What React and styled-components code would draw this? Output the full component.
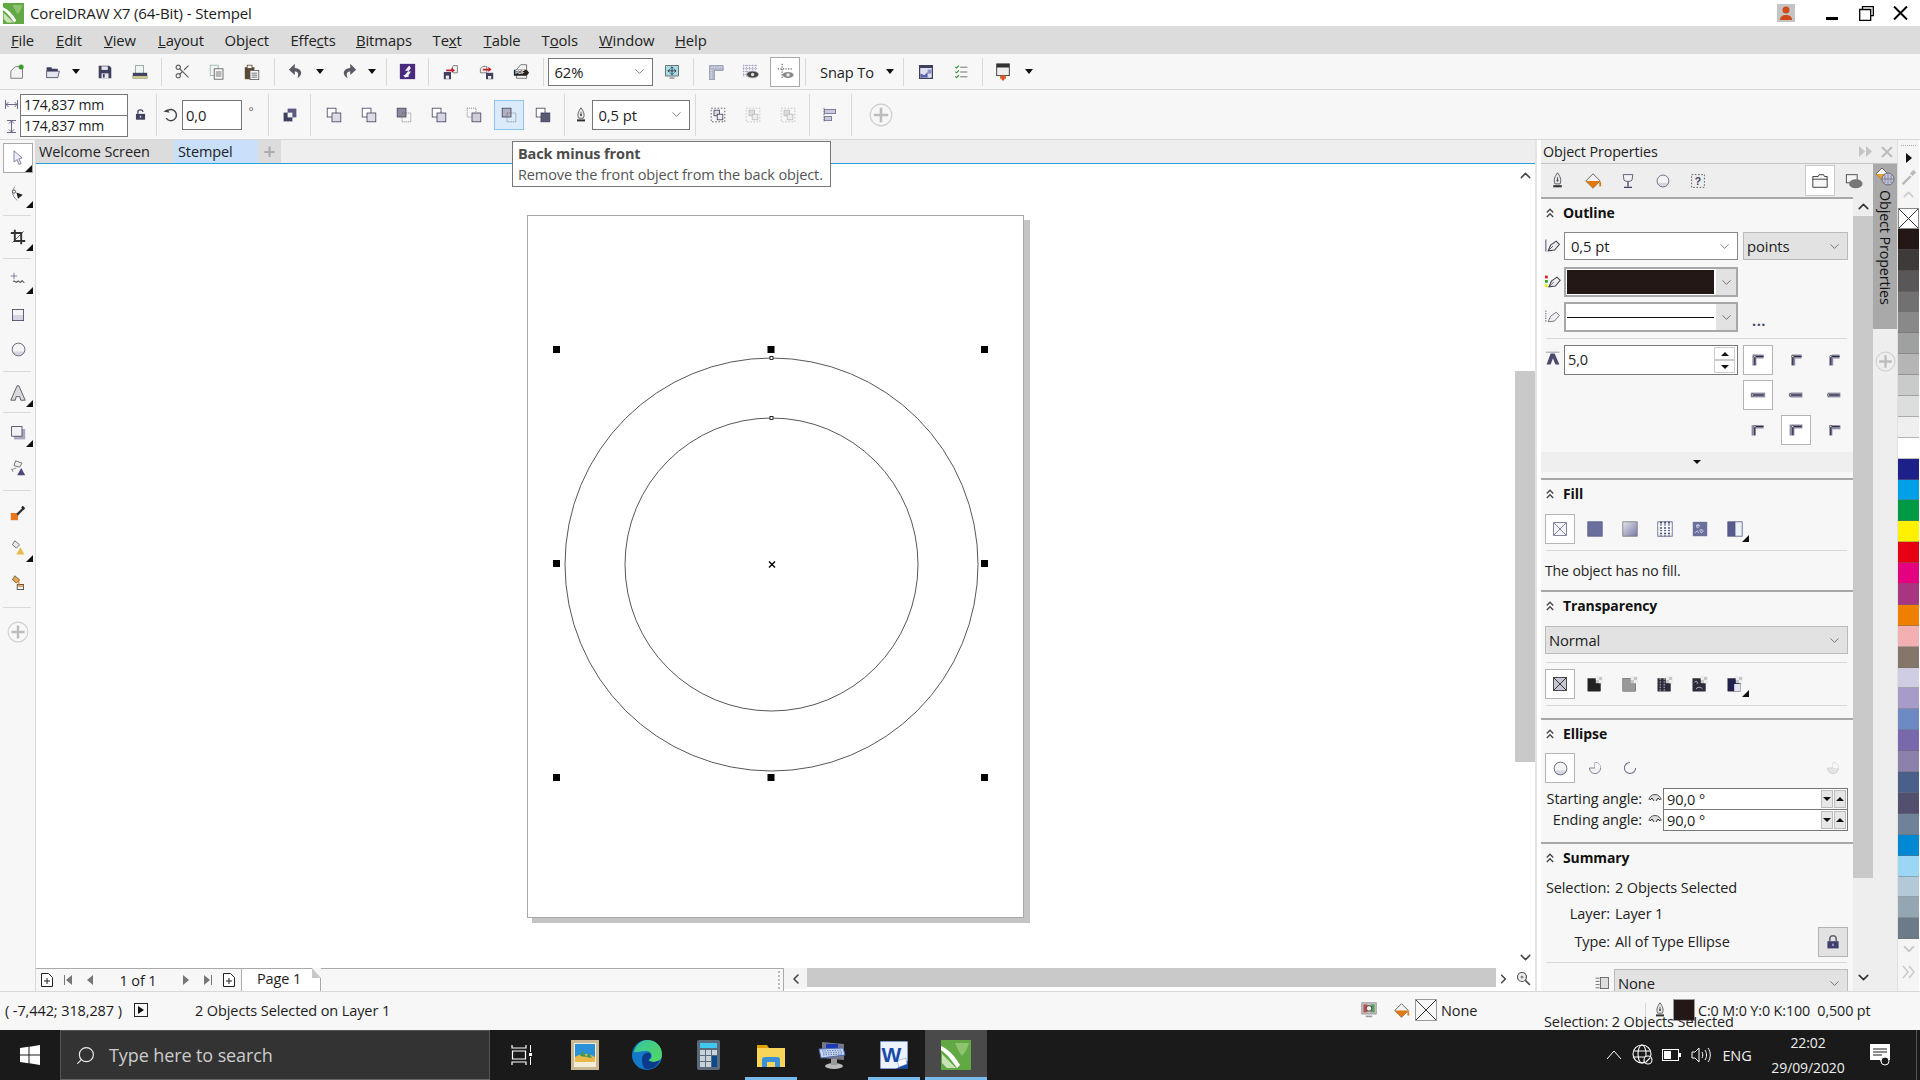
import React from 'react';
import styled, { createGlobalStyle } from 'styled-components';
import { ChevronDown, ChevronUp, ChevronLeft, ChevronRight, Scissors, Search } from 'lucide-react';

const GlobalStyle = createGlobalStyle`
  html, body { margin: 0; padding: 0; overflow: hidden; background: #fff; }
  * { box-sizing: border-box; }
  body { font-family: "Open Sans", "Noto Sans", sans-serif; font-size: 14.5px; color: #1c1c1c; }
  u { text-underline-offset: 1px; text-decoration-thickness: 1px; }
`;

const Shell = styled.div`
  position: relative;
  width: 1920px;
  height: 1080px;
  display: flex;
  flex-direction: column;
  overflow: hidden;
  letter-spacing: -0.1px;
`;

/* ---------- top bars ---------- */
const TitleBar = styled.div`
  height: 26px;
  background: #fff;
  display: flex;
  align-items: center;
  padding-left: 3px;
`;
const TitleText = styled.div`
  margin-left: 6px;
  font-size: 15px;
  flex: 1;
`;
const TitleButton = styled.div`
  width: 34px;
  height: 26px;
  margin-left: ${(p) => p.$ml || 0}px;
  display: flex;
  align-items: center;
  justify-content: center;
`;
const MenuBar = styled.div`
  height: 28px;
  background: #dcdcdc;
  display: flex;
  align-items: center;
  padding-left: 11px;
`;
const MenuItem = styled.span`
  width: ${(p) => p.$w}px;
  flex: none;
  font-size: 14.8px;
  color: #222;
`;
const ToolRow = styled.div`
  height: ${(p) => p.$h}px;
  background: #f7f7f7;
  border-bottom: 1px solid #d8d8d8;
  display: flex;
  align-items: center;
`;
const Tool = styled.div`
  flex: none;
  width: ${(p) => p.$w || 35}px;
  height: 30px;
  margin-left: ${(p) => p.$ml || 0}px;
  display: flex;
  align-items: center;
  justify-content: center;
  background: ${(p) => (p.$blue ? '#dcebfa' : 'transparent')};
  border: ${(p) => (p.$blue ? '1px solid #8cc4ee' : p.$on ? '1px solid #a8a8a8' : 'none')};
  ${(p) => p.$on && 'background: #fff;'}
`;
const Drop = styled.div`
  flex: none;
  width: ${(p) => p.$w || 17}px;
  margin-left: ${(p) => p.$ml || 0}px;
  padding-left: 2px;
  display: flex;
  &::before {
    content: '';
    border-left: 4.5px solid transparent;
    border-right: 4.5px solid transparent;
    border-top: 5px solid #111;
  }
`;
const Sep = styled.div`
  flex: none;
  width: 1px;
  height: ${(p) => p.$h || 28}px;
  margin: 0 ${(p) => p.$r ?? p.$m ?? 3}px 0 ${(p) => p.$m ?? 3}px;
  background: #d9d9d9;
`;
const Combo = styled.div`
  flex: none;
  width: ${(p) => p.$w}px;
  height: ${(p) => p.$h || 28}px;
  margin-left: ${(p) => p.$ml || 0}px;
  background: ${(p) => p.$bg || '#fff'};
  border: 1px solid ${(p) => p.$line || '#777'};
  display: flex;
  align-items: center;
  justify-content: space-between;
  padding: 0 5px 0 ${(p) => p.$pad ?? (p.$bg ? 3 : 6)}px;
  font-size: 14.8px;
  color: #1c1c1c;
  white-space: nowrap;
  overflow: hidden;
`;
const SnapLabel = styled.span`
  margin-left: 6px;
  font-size: 14.6px;
`;
const SizeStack = styled.div`
  margin: 2px 0 0 3px;
  display: grid;
  grid-template-columns: 17px 108px;
  grid-auto-rows: 21.5px;
  align-items: center;
  justify-items: center;
`;
const SizeField = styled.div`
  width: 100%;
  height: 22px;
  border: 1px solid #777;
  background: #fff;
  font-size: 14px;
  padding-left: 3px;
  line-height: 20px;
`;
const Degree = styled.span`
  width: 18px;
  text-align: center;
  font-size: 12px;
  color: #666;
  margin-bottom: 6px;
`;

/* ---------- workspace ---------- */
const Workspace = styled.div`
  flex: 1;
  min-height: 0;
  display: flex;
  background: #fff;
`;
const Toolbox = styled.div`
  width: 36px;
  flex: none;
  background: #f7f7f7;
  border-right: 1px solid #d8d8d8;
  padding: 1px 0 0 3px;
`;
const BoxTool = styled.div`
  position: relative;
  width: 30px;
  height: ${(p) => (p.$on ? 30 : 35)}px;
  margin: ${(p) => (p.$on ? '2px 0 3px' : 0)};
  display: flex;
  align-items: center;
  justify-content: center;
  border: ${(p) => (p.$on ? '1px solid #aaa' : 'none')};
  background: ${(p) => (p.$on ? '#fff' : 'transparent')};
  ${(p) =>
    p.$more &&
    `&::after {
      content: '';
      position: absolute;
      right: 0;
      bottom: ${p.$on ? 0 : 3}px;
      border-left: 7px solid transparent;
      border-bottom: 7px solid #111;
    }`}
`;
const BoxSep = styled.div`
  height: ${(p) => p.$h || 8}px;
  display: flex;
  align-items: center;
  &::before {
    content: '';
    width: 28px;
    height: 1px;
    background: #d9d9d9;
  }
`;
const DocArea = styled.div`
  width: 1499px;
  flex: none;
  display: flex;
  flex-direction: column;
`;
const DocTabs = styled.div`
  height: 24px;
  flex: none;
  background: #eee;
  border-bottom: 1px solid #2a9fe0;
  display: flex;
`;
const DocTab = styled.div`
  width: ${(p) => p.$w}px;
  height: 23px;
  background: ${(p) => p.$bg};
  padding-left: ${(p) => p.$pad}px;
  font-size: 14.5px;
  line-height: 23px;
  color: #222;
`;
const AddTab = styled.div`
  width: 23px;
  height: 23px;
  background: #dcdcdc;
  color: #aaa;
  font-size: 22px;
  font-weight: 600;
  line-height: 21px;
  text-align: center;
`;
const CanvasRow = styled.div`
  flex: 1;
  min-height: 0;
  display: flex;
`;
const Canvas = styled.div`
  position: relative;
  flex: 1;
`;
const Drawing = styled.svg`
  position: absolute;
  left: 0;
  top: 0;
`;
const Tooltip = styled.div`
  position: absolute;
  left: 512px;
  top: 141px;
  width: 319px;
  height: 46px;
  background: #fff;
  border: 1px solid #777;
  padding: 1px 5px;
  color: #555;
  font-size: 14.5px;
  line-height: 21px;
  letter-spacing: -0.12px;
  white-space: nowrap;
  z-index: 5;
  b { font-weight: 700; color: #4c4c4c; }
`;
const VTrack = styled.div`
  width: 20px;
  flex: none;
  display: flex;
  flex-direction: column;
  align-items: center;
  background: #fff;
`;
const Arrow = styled.div`
  height: ${(p) => p.$h || 22}px;
  display: flex;
  align-items: center;
  justify-content: center;
  color: #444;
  flex: none;
`;
const VThumb = styled.div`
  width: 20px;
  height: ${(p) => p.$h}px;
  margin-top: ${(p) => p.$mt}px;
  margin-bottom: auto;
  background: #c9c9c9;
`;
const PageBar = styled.div`
  height: 23px;
  flex: none;
  display: flex;
  align-items: stretch;
`;
const PageNav = styled.div`
  width: 748px;
  flex: none;
  display: flex;
  align-items: center;
  background: #f7f7f7;
  border-top: 1px solid #aaa;
  border-right: 1px solid #aaa;
  padding-left: 4px;
`;
const PageIcon = styled.div`
  width: ${(p) => p.$w || 22}px;
  margin-left: ${(p) => p.$ml || 0}px;
  display: flex;
  justify-content: center;
  flex: none;
`;
const PageCount = styled.div`
  width: 76px;
  text-align: center;
  font-size: 14.5px;
  flex: none;
`;
const PageTab = styled.div`
  position: relative;
  width: 80px;
  height: 22px;
  margin-left: 1px;
  background: #fff;
  border-left: 1px solid #aaa;
  border-right: 1px solid #aaa;
  padding-left: 15px;
  font-size: 14.5px;
  line-height: 20px;
  &::after {
    content: '';
    position: absolute;
    top: -1px;
    right: -1px;
    border-top: 10px solid #f7f7f7;
    border-left: 9px solid #c8c8c8;
  }
`;
const Grip = styled.div`
  margin-left: auto;
  margin-right: 3px;
  width: 2px;
  height: 18px;
  border-left: 2px dotted #bbb;
`;
const HTrack = styled.div`
  flex: 1;
  display: flex;
  align-items: flex-start;
  background: #fff;
`;
const HButton = styled.div`
  width: ${(p) => p.$w}px;
  height: 21px;
  display: flex;
  align-items: center;
  justify-content: center;
  color: #444;
  background: ${(p) => p.$bg || 'transparent'};
  flex: none;
`;
const HThumb = styled.div`
  width: 689px;
  height: 19px;
  background: #c9c9c9;
  flex: none;
`;

/* ---------- docker ---------- */
const Gap = styled.div`
  width: 6px;
  flex: none;
  background: #fff;
  border-left: 2px solid #e4e4e4;
`;
const Docker = styled.div`
  width: 356px;
  flex: none;
  display: flex;
  flex-direction: column;
`;
const DockHead = styled.div`
  height: 24px;
  flex: none;
  background: #eee;
  border-bottom: 1px solid #c4c4c4;
  display: flex;
  align-items: center;
  gap: 8px;
  padding: 0 4px 0 2px;
  font-size: 14.3px;
  color: #222;
`;
const DockTitle = styled.div`
  flex: 1;
`;
const DockBody = styled.div`
  flex: 1;
  min-height: 0;
  display: flex;
`;
const DockMain = styled.div`
  width: 332px;
  flex: none;
  display: flex;
  flex-direction: column;
  overflow: hidden;
`;
const TabIcons = styled.div`
  height: 33px;
  flex: none;
  background: #eee;
  display: flex;
  align-items: center;
`;
const TabIcon = styled.div`
  flex: none;
  width: ${(p) => p.$w || 35}px;
  height: ${(p) => (p.$on ? 31 : 30)}px;
  margin-left: ${(p) => p.$ml || 0}px;
  background: ${(p) => (p.$on ? '#fff' : 'transparent')};
  border: ${(p) => (p.$on ? '1px solid #c8c8c8' : 'none')};
  display: flex;
  align-items: center;
  justify-content: center;
`;
const ScrollWrap = styled.div`
  flex: 1;
  min-height: 0;
  display: flex;
`;
const Panel = styled.div`
  width: 312px;
  flex: none;
  background: #f7f7f7;
  overflow: hidden;
`;
const Section = styled.div`
  border-top: 2px solid #a8a8a8;
  padding: 0 5px ${(p) => p.$pb || 0}px 4px;
`;
const SectionHead = styled.div`
  height: 30px;
  display: flex;
  align-items: center;
  gap: 9px;
  font-weight: 700;
  font-size: 14px;
  color: #111;
  padding: 0 0 3px 1px;
`;
const Row = styled.div`
  display: flex;
  align-items: center;
  margin-top: ${(p) => p.$mt || 0}px;
`;
const FieldIcon = styled.div`
  width: 19px;
  height: 28px;
  flex: none;
  display: flex;
  align-items: center;
`;
const SwatchField = styled.div`
  width: 174px;
  height: 30px;
  flex: none;
  border: 2px solid #a8a8a8;
  background: #fff;
  display: flex;
`;
const SwatchFill = styled.div`
  flex: 1;
  margin: 1px 2px 1px 1px;
  background: ${(p) => p.$color};
`;
const LineFill = styled.div`
  flex: 1;
  margin: 0 2px 0 1px;
  display: flex;
  align-items: center;
  &::before {
    content: '';
    flex: 1;
    height: 1px;
    background: #111;
  }
`;
const DropPart = styled.div`
  width: 20px;
  flex: none;
  background: #e2e2e2;
  display: flex;
  align-items: center;
  justify-content: center;
  color: #555;
`;
const Ellipsis = styled.span`
  margin-left: 14px;
  margin-top: 6px;
  color: #446;
  font-weight: 700;
  letter-spacing: 0.5px;
`;
const Divider = styled.div`
  height: 1px;
  margin: ${(p) => p.$mt || 6}px 1px 0;
  background: #dadada;
`;
const MiterWrap = styled.div`
  display: flex;
  align-items: flex-start;
  margin-top: 6px;
`;
const MiterField = styled.div`
  width: 174px;
  height: 30px;
  flex: none;
  border: 1px solid #777;
  background: #fff;
  display: flex;
  justify-content: space-between;
  padding-left: 3px;
  line-height: 28px;
  font-size: 14.5px;
`;
const Spin = styled.div`
  width: 21px;
  margin: 1px 2px;
  display: flex;
  flex-direction: column;
  border-left: 1px solid #ccc;
  border-right: 1px solid #ccc;
`;
const SpinPart = styled.div`
  flex: 1;
  display: flex;
  align-items: center;
  justify-content: center;
  border-top: 1px solid #ccc;
  border-bottom: 1px solid #ccc;
  &::before {
    content: '';
    border-left: 4px solid transparent;
    border-right: 4px solid transparent;
    ${(p) => (p.$up ? 'border-bottom: 4px solid #111;' : 'border-top: 4px solid #111;')}
  }
`;
const CornerGrid = styled.div`
  margin-left: 5px;
  display: grid;
  grid-template-columns: repeat(3, 30px);
  grid-auto-rows: 30px;
  column-gap: 8px;
  row-gap: 5px;
`;
const OptionButton = styled.div`
  position: relative;
  width: 30px;
  height: 30px;
  flex: none;
  display: flex;
  align-items: center;
  justify-content: center;
  background: ${(p) => (p.$on ? '#fff' : 'transparent')};
  border: 1px solid ${(p) => (p.$on ? '#b4b4b4' : 'transparent')};
  ${(p) =>
    p.$more &&
    `&::after {
      content: '';
      position: absolute;
      right: 0;
      bottom: 1px;
      border-left: 7px solid transparent;
      border-bottom: 7px solid #111;
    }`}
`;
const OptionRow = styled.div`
  display: flex;
  gap: 5px;
  margin-top: ${(p) => p.$mt || 0}px;
`;
const PushRight = styled.div`
  margin-left: auto;
  width: 30px;
  height: 30px;
  display: flex;
  align-items: center;
  justify-content: center;
`;
const CollapseBar = styled.div`
  height: 20px;
  margin: 7px -5px 6px -4px;
  background: #efefef;
  display: flex;
  align-items: center;
  justify-content: center;
  &::before {
    content: '';
    border-left: 4px solid transparent;
    border-right: 4px solid transparent;
    border-top: 4px solid #111;
  }
`;
const NoFill = styled.div`
  height: 39px;
  line-height: 39px;
  font-size: 14px;
  color: #222;
`;
const AngleRow = styled.div`
  display: grid;
  grid-template-columns: 97px 21px 185px;
  align-items: center;
  height: 21px;
  margin-top: ${(p) => p.$mt || 0}px;
`;
const AngleLabel = styled.div`
  text-align: right;
  font-size: 14.5px;
  color: #222;
  margin-top: -1px;
`;
const AngleIconCell = styled.div`
  display: flex;
  justify-content: flex-end;
  padding-right: 1px;
`;
const AngleField = styled.div`
  height: 22px;
  background: #fff;
  border: 1px solid #777;
  display: flex;
  align-items: center;
  justify-content: space-between;
  padding-left: 3px;
  font-size: 14.5px;
`;
const AngleSpins = styled.div`
  display: flex;
  gap: 1px;
  margin-right: 1px;
`;
const AngleSpin = styled.div`
  width: 12px;
  height: 18px;
  background: #e6e6e6;
  border: 1px solid #bbb;
  display: flex;
  align-items: center;
  justify-content: center;
  &::before {
    content: '';
    border-left: 4px solid transparent;
    border-right: 4px solid transparent;
    ${(p) => (p.$up ? 'border-bottom: 4px solid #111;' : 'border-top: 4px solid #111;')}
  }
`;
const SummaryRow = styled.div`
  display: grid;
  grid-template-columns: 65px 1fr auto;
  column-gap: 5px;
  align-items: center;
  height: ${(p) => p.$h}px;
  font-size: 14.5px;
  color: #222;
`;
const SummaryLabel = styled.div`
  text-align: right;
`;
const LockButton = styled.div`
  width: 30px;
  height: 30px;
  background: #e2e2e2;
  border: 1px solid #b4b4b4;
  display: flex;
  align-items: center;
  justify-content: center;
`;
const ListSpacer = styled.div`
  width: 49px;
  flex: none;
`;
const PanelScroll = styled.div`
  width: 20px;
  flex: none;
  background: #eee;
  display: flex;
  flex-direction: column;
  align-items: center;
`;
const PanelThumb = styled.div`
  width: 20px;
  height: 662px;
  background: #c9c9c9;
  margin-bottom: auto;
`;
const VerticalTabs = styled.div`
  width: 24px;
  flex: none;
  background: #eee;
  display: flex;
  flex-direction: column;
  align-items: center;
`;
const VerticalTab = styled.div`
  width: 24px;
  height: 165px;
  background: #a9a9a9;
  display: flex;
  flex-direction: column;
  align-items: center;
  padding-top: 3px;
`;
const VerticalText = styled.div`
  writing-mode: vertical-rl;
  font-size: 14.3px;
  line-height: 16px;
  color: #111;
  margin-top: 3px;
`;
const Palette = styled.div`
  width: 22px;
  flex: none;
  background: #f5f5f5;
  border-left: 1px solid #e0e0e0;
  display: flex;
  flex-direction: column;
  align-items: center;
`;
const PaletteTop = styled.div`
  height: 68px;
  flex: none;
  display: flex;
  flex-direction: column;
  align-items: center;
  color: #ccc;
`;
const Dots = styled.div`
  width: 15px;
  height: 1px;
  margin-top: 5px;
  border-top: 1px dotted #aaa;
`;
const PlayMark = styled.div`
  margin: 7px 0 5px;
  border-top: 5px solid transparent;
  border-bottom: 5px solid transparent;
  border-left: 6px solid #111;
`;
const Swatches = styled.div`
  width: 21px;
  display: grid;
  grid-auto-rows: 20.9px;
`;
const Swatch = styled.div`
  background: ${(p) => p.$c};
  box-shadow: inset 0 -1px 0 rgba(110, 110, 110, 0.45);
`;
const NoColor = styled.div`
  background: #fff;
  border: 1px solid #888;
  display: flex;
`;
const PaletteEnd = styled.div`
  margin-top: 1px;
  display: flex;
  flex-direction: column;
  align-items: center;
  color: #c8c8c8;
  gap: 7px;
`;
const PanelPlus = styled.div`
  margin-top: 22px;
`;

/* ---------- status bar and taskbar ---------- */
const StatusBar = styled.div`
  position: relative;
  height: 39px;
  flex: none;
  background: #f7f7f7;
  border-top: 1px solid #d8d8d8;
  padding-bottom: 2px;
  display: flex;
  align-items: center;
  font-size: 14.5px;
`;
const Coordinates = styled.span`
  margin-left: 5px;
  width: 129px;
  flex: none;
`;
const PlayBox = styled.div`
  width: 14px;
  height: 14px;
  flex: none;
  border: 1px solid #222;
  display: flex;
  align-items: center;
  justify-content: center;
  &::before {
    content: '';
    border-top: 4px solid transparent;
    border-bottom: 4px solid transparent;
    border-left: 6px solid #111;
  }
`;
const StatusText = styled.span`
  margin-left: 47px;
  flex: 1;
`;
const StatusRight = styled.div`
  display: flex;
  align-items: center;
  width: 568px;
  flex: none;
  padding-left: 9px;
`;
const StatusGap = styled.div`
  width: ${(p) => p.$w}px;
  flex: none;
`;
const NoneBox = styled.div`
  width: 22px;
  height: 22px;
  margin-left: 5px;
  border: 1px solid #999;
  display: flex;
  flex: none;
`;
const NoneLabel = styled.span`
  margin-left: 4px;
  width: 202px;
  flex: none;
`;
const StatusSwatch = styled.div`
  width: 22px;
  height: 22px;
  background: #231815;
  border: 1px solid #999;
  flex: none;
  margin: 0 3px 0 5px;
`;
const ColorInfo = styled.span`
  white-space: pre;
  font-size: 14.3px;
`;
const GhostClip = styled.div`
  position: absolute;
  left: 1544px;
  top: 25px;
  height: 13px;
  overflow: hidden;
  font-size: 14.5px;
  color: #222;
  white-space: nowrap;
`;
const GhostText = styled.div`
  margin-top: -5px;
`;
const Taskbar = styled.div`
  height: 50px;
  flex: none;
  background: #1a1a1a;
  display: flex;
  align-items: center;
  color: #fff;
`;
const StartButton = styled.div`
  width: 60px;
  flex: none;
  display: flex;
  justify-content: center;
`;
const SearchBox = styled.div`
  width: 430px;
  height: 50px;
  flex: none;
  background: #333;
  border: 1px solid #555;
  border-bottom-color: #666;
  display: flex;
  align-items: center;
  padding-left: 14px;
  gap: 13px;
  font-size: 18px;
  color: #ccc;
`;
const TaskCell = styled.div`
  position: relative;
  width: ${(p) => p.$w || 61.9}px;
  height: 50px;
  flex: none;
  display: flex;
  align-items: center;
  justify-content: center;
  background: ${(p) => (p.$on ? '#4a4a4a' : 'transparent')};
  ${(p) =>
    p.$open &&
    `&::after {
      content: '';
      position: absolute;
      left: ${p.$on ? 0 : 5}px;
      right: ${p.$on ? 0 : 5}px;
      bottom: 0;
      height: 3px;
      background: #76b9ed;
    }`}
`;
const Tray = styled.div`
  margin-left: auto;
  display: flex;
  align-items: center;
  height: 50px;
  padding-right: 3px;
`;
const TrayCell = styled.div`
  width: ${(p) => p.$w || 29}px;
  display: flex;
  justify-content: center;
  font-size: 14.5px;
  color: #eee;
  flex: none;
`;
const Clock = styled.div`
  width: 92px;
  text-align: center;
  font-size: 14px;
  line-height: 25px;
  color: #eee;
  margin-left: 4px;
`;
const ShowDesktop = styled.div`
  width: 1px;
  height: 50px;
  margin-left: 10px;
  background: #555;
`;

/* ---------- icons ---------- */
const G = ({ s = 16, children }) => (
  <svg width={s} height={s} viewBox="0 0 20 20" style={{ display: 'block', flex: 'none' }}>
    {children}
  </svg>
);
const INK = '#3f3f5f';
const MID = '#6a6a8c';

const NewDoc = () => (
  <G s={18}>
    <path d="M2 9l5-5h8v13H2z" fill="#f2f2f2" stroke="#777" />
    <circle cx="13.5" cy="4.5" r="2.8" fill="#3a9a2c" />
  </G>
);
const OpenIcon = () => (
  <G>
    <path d="M2 4h6l1 2h7v3H2z" fill={INK} />
    <path d="M2 9h16l-2 8H2z" fill="#e4e6ef" stroke={INK} />
  </G>
);
const SaveIcon = () => (
  <G s={14}>
    <path d="M1 1h15l3 3v15H1z" fill={INK} />
    <rect x="5" y="2" width="9" height="5" fill="#e8e8f0" />
    <rect x="5" y="12" width="10" height="7" fill="#e8e8f0" />
    <rect x="7" y="13" width="2.5" height="5" fill={INK} />
  </G>
);
const PrintIcon = () => (
  <G>
    <rect x="4.5" y="2" width="10" height="10" fill="#eef5f2" stroke="#8a9a98" />
    <rect x="1" y="11" width="18" height="4" fill={INK} />
    <rect x="1" y="15" width="18" height="3" fill="#d8d288" stroke="#777" strokeWidth="0.6" />
  </G>
);
const CutIcon = () => <Scissors size={17} color="#666" strokeWidth={1.7} style={{ transform: 'scaleY(-1)' }} />;
const CopyIcon = () => (
  <G>
    <rect x="1.5" y="1.5" width="10" height="13" fill="#eef5f3" stroke="#93b4ad" />
    <rect x="6.5" y="6" width="11" height="13" fill="#f7f7f7" stroke="#555" />
    <path d="M8.5 10h7M8.5 12.5h7M8.5 15h7" stroke="#555" />
  </G>
);
const PasteIcon = () => (
  <G>
    <rect x="1" y="4" width="12" height="15" fill="#5c4a35" />
    <rect x="4" y="1.5" width="6" height="4" fill="#f4f4f4" stroke="#5c4a35" />
    <rect x="7.5" y="8" width="11" height="11.5" fill="#f7f7f7" stroke="#555" />
    <path d="M9.5 11.5h7M9.5 14h7M9.5 16.5h7" stroke="#555" />
  </G>
);
const UndoIcon = () => (
  <G s={17}>
    <path d="M8 1L1 8l7 6v-4c4 0 5 3 3 8 6-3 7-11-3-12z" fill="#5a5a66" />
  </G>
);
const RedoIcon = () => (
  <G s={17}>
    <path d="M12 1l7 7-7 6v-4c-4 0-5 3-3 8-6-3-7-11 3-12z" fill="#5a5a66" />
  </G>
);
const ConnectIcon = () => (
  <G s={17}>
    <rect x="1" y="1" width="18" height="18" fill="#4a2a7c" />
    <path d="M12 3L7 9h4l-4 5H5l2 3 5-1-1-1 3-5h-3l3-4z" fill="#f2f2f2" />
  </G>
);
const ImportIcon = () => (
  <G>
    <path d="M13 2h5v9h-5l-3-3z" fill="#f2f2f2" stroke="#666" />
    <rect x="1" y="10" width="9" height="9" fill={INK} />
    <rect x="3.5" y="14.5" width="4" height="4" fill="#eee" />
    <path d="M4 7h7V4.5L15 8l-4 3V9H4z" fill="#c0202a" />
  </G>
);
const ExportIcon = () => (
  <G>
    <path d="M3 6l3-3h5v8H3z" fill="#f2f2f2" stroke="#666" />
    <rect x="10" y="11" width="9" height="8" fill={INK} />
    <rect x="12.5" y="15" width="4" height="3.5" fill="#eee" />
    <path d="M6 6h7V3.5L17 7l-4 3V8H6z" fill="#c0202a" />
  </G>
);
const PdfIcon = () => (
  <G s={17}>
    <path d="M4 8l5-6h7v16H4z" fill="#f2f2f2" stroke="#666" />
    <path d="M1 8h15l3 3.5-3 3.5H1z" fill="#222" />
    <text x="2.5" y="13.5" fontSize="5.5" fontWeight="700" fill="#fff" fontFamily="Liberation Sans">PDF</text>
  </G>
);
const FullIcon = () => (
  <G>
    <rect x="2" y="2" width="16" height="13" fill="#a8dce6" stroke="#555" />
    <path d="M10 4v9M5 8.5h10M7 6.5L5 8.5l2 2M13 6.5l2 2-2 2M8 5.5l2-2 2 2M8 11.5l2 2 2-2" stroke="#223" fill="none" />
    <path d="M7 17.5h6" stroke="#777" strokeWidth="1.5" />
  </G>
);
const RulerIcon = () => (
  <G>
    <path d="M2 2h17v6H8v12H2z" fill="#b4b9cc" stroke="#8c90a8" />
    <path d="M5 3v2M8 3v2M11 3v2M14 3v2M17 3v2M3 8h2M3 11h2M3 14h2M3 17h2" stroke="#eee" />
  </G>
);
const GridEye = () => (
  <G s={17}>
    <path d="M2 2v14M5.5 2v14M9 2v14M12.5 2v7M16 2v7M1 3h17M1 6.5h17M1 10h8M1 13.5h8" stroke="#9a9abf" strokeDasharray="1.5 1" />
    <ellipse cx="12.5" cy="13.5" rx="7" ry="4" fill="#444" stroke="#bbb" />
    <circle cx="12.5" cy="13.5" r="2" fill="#ddd" />
  </G>
);
const GuideEye = () => (
  <G s={17}>
    <path d="M6 1v17M1 7h18" stroke="#222" strokeDasharray="1.5 1.5" />
    <ellipse cx="13" cy="14" rx="6.5" ry="3.5" fill="#8a8a8a" />
    <circle cx="13" cy="14" r="2" fill="#eee" />
  </G>
);
const OptionsIcon = () => (
  <G>
    <rect x="2" y="2" width="16" height="16" fill="#dfe1ee" stroke={INK} strokeWidth="1.5" />
    <rect x="2" y="2" width="16" height="3" fill={INK} />
    <path d="M3 17V12l5 2 4-4v7z" fill="#5a60a8" />
    <rect x="12" y="7" width="5" height="5" fill="#8a90c8" />
  </G>
);
const CheckIcon = () => (
  <G>
    <path d="M9 4h9M9 10h9M9 16h9" stroke="#555" />
    <path d="M3 3.5l1.5 1.5 3-3M3 9.5L4.5 11l3-3M3 15.5L4.5 17l3-3" stroke="#2f8f2f" fill="none" strokeWidth="1.4" />
  </G>
);
const LaunchIcon = () => (
  <G s={18}>
    <rect x="3" y="1" width="14" height="13" fill="#eee" stroke="#333" />
    <rect x="3" y="1" width="14" height="4" fill="#333" />
    <path d="M10 13c3 2 3 4 0 7-3-3-3-5 0-7z" fill="#e8481c" />
    <path d="M7 14c1 1 1 3 0 4M13 14c-1 1-1 3 0 4" stroke="#f09020" />
  </G>
);
const WidthIcon = () => (
  <svg width="13" height="11" viewBox="0 0 13 11">
    <path d="M.5 1v9M12.5 1v9M1 5.5h11M3.5 3L1 5.5 3.5 8M9.5 3L12 5.5 9.5 8" stroke={MID} fill="none" />
  </svg>
);
const HeightIcon = () => (
  <svg width="11" height="13" viewBox="0 0 11 13">
    <path d="M1 .5h9M1 12.5h9M5.5 1v11M3 3.5L5.5 1 8 3.5M3 9.5L5.5 12 8 9.5" stroke={MID} fill="none" />
  </svg>
);
const LockOpen = () => (
  <G s={13}>
    <path d="M6 9V6c0-4 7-4 8 0" stroke={INK} strokeWidth="2" fill="none" />
    <rect x="3" y="9" width="14" height="9" fill={INK} />
    <rect x="9" y="12" width="2" height="3" fill="#ddd" />
  </G>
);
const LockClosed = () => (
  <G>
    <path d="M6 9V6c0-5 8-5 8 0v3" stroke="#667" strokeWidth="2" fill="none" />
    <rect x="3" y="9" width="14" height="9" fill="#3f3f70" />
    <rect x="9" y="12" width="2" height="3" fill="#aab" />
  </G>
);
const RotateIcon = () => (
  <G>
    <path d="M5 5a7 7 0 1 1-1 9" stroke="#444" strokeWidth="1.8" fill="none" />
    <path d="M1 4h6v5z" fill="#444" transform="rotate(-30 4 6)" />
  </G>
);
const CombineIcon = () => (
  <G>
    <rect x="7" y="2" width="11" height="11" fill="#5a5a82" />
    <rect x="2" y="7" width="11" height="11" fill={INK} />
    <rect x="7" y="7" width="6" height="6" fill="#f2f2f2" />
  </G>
);
const Bool = ({ back, front, backDash, frontDash, frontOnTop = true }) => {
  const a = <rect x="1.5" y="1.5" width="11" height="11" fill={back} stroke={backDash ? '#666' : INK} strokeDasharray={backDash ? '1.2 1.2' : undefined} />;
  const b = <rect x="7.5" y="7.5" width="11" height="11" fill={front} stroke={frontDash ? '#666' : INK} strokeDasharray={frontDash ? '1.2 1.2' : undefined} />;
  return <G>{frontOnTop ? <>{a}{b}</> : <>{b}{a}</>}</G>;
};
const FadedBox = ({ x }) => (
  <G>
    <rect x="1.5" y="1.5" width="17" height="17" fill="none" stroke={x ? '#bbb' : INK} strokeDasharray="2 2" />
    <rect x="5" y="4" width="7" height="7" fill="#ddd" stroke={x ? '#bbb' : INK} />
    <rect x="9" y="9" width="7" height="7" fill="#eee" stroke={x ? '#bbb' : INK} />
  </G>
);
const AlignIcon = () => (
  <G>
    <path d="M2.5 1v18" stroke="#222" strokeDasharray="1 1" />
    <rect x="3" y="3" width="14" height="5" fill="#c9cade" stroke={MID} />
    <rect x="3" y="12" width="9" height="5" fill="#c9cade" stroke={MID} />
  </G>
);
const PlusRound = ({ s = 24 }) => (
  <G s={s}>
    <circle cx="10" cy="10" r="9" fill="none" stroke="#cfcfcf" />
    <path d="M10 4v12M4 10h12" stroke="#bdbdbd" strokeWidth="2.2" />
  </G>
);
const PenIcon = ({ s = 16 }) => (
  <G s={s}>
    <path d="M10 1c3 4 5 8 3 13H7C5 9 7 5 10 1z" fill="#e8e8ee" stroke="#444" />
    <path d="M10 6v5" stroke="#444" />
    <circle cx="10" cy="10" r="1.2" fill="#444" />
    <rect x="5" y="15.5" width="10" height="2.5" fill="#333" />
  </G>
);
const BucketIcon = ({ s = 18 }) => (
  <G s={s}>
    <path d="M10 2l8 8-8 8-8-8z" fill="#f2f2f2" stroke="#555" />
    <path d="M2 10h16l-8 8z" fill="#e07a10" />
    <path d="M18 11v5" stroke="#e07a10" strokeWidth="2" />
  </G>
);
const GlassIcon = () => (
  <G>
    <path d="M4 2h12l-1 7c-1 2-9 2-10 0z" fill="#f2f2f2" stroke={INK} />
    <path d="M10 11v6M5 18h10" stroke={INK} strokeWidth="1.6" />
  </G>
);
const CircleIcon = ({ s = 15 }) => (
  <G s={s}>
    <circle cx="10" cy="10" r="8.5" fill="#f4f4f4" />
    <path d="M2 12.5a8.5 8.5 0 0 0 16 0z" fill="#d6d6e2" />
    <circle cx="10" cy="10" r="8.5" fill="none" stroke={INK} />
  </G>
);
const SummaryIcon = () => (
  <G>
    <rect x="2" y="2" width="16" height="16" fill="none" stroke={INK} strokeDasharray="2 2" />
    <text x="6" y="15" fontSize="13" fontWeight="700" fill={INK} fontFamily="Liberation Sans">?</text>
  </G>
);
const TabBox = () => (
  <G s={18}>
    <path d="M2 5h6l1-2h5l1 2h3v12H2z" fill="#f7f7f7" stroke="#333" />
    <path d="M2 8h16" stroke="#333" />
  </G>
);
const ObjectsIcon = () => (
  <G s={18}>
    <rect x="1.5" y="3" width="12" height="9" fill="#f4f4f4" stroke="#444" />
    <ellipse cx="12" cy="13" rx="7.5" ry="5" fill="#777" />
  </G>
);
const FastIcon = () => (
  <svg width="14" height="13" viewBox="0 0 14 13">
    <path d="M0 1l6 5.5L0 12zM7 1l6 5.5L7 12z" fill="#c4c4c4" />
  </svg>
);
const CloseSmall = () => (
  <svg width="12" height="12" viewBox="0 0 12 12">
    <path d="M1 1l10 10M11 1L1 11" stroke="#bdbdbd" strokeWidth="2" />
  </svg>
);
const Collapse = () => (
  <svg width="8" height="10" viewBox="0 0 8 10" style={{ flex: 'none' }}>
    <path d="M.8 4.5L4 1.2l3.2 3.3M.8 9L4 5.7 7.2 9" stroke="#444" strokeWidth="1.3" fill="none" />
  </svg>
);
const OutlineWidth = () => (
  <G>
    <path d="M1 2v15" stroke="#8080a4" strokeWidth="1.8" />
    <path d="M4 16l3-7 7-5 4 4-6 7z" fill="#eee" stroke="#445" strokeWidth="1.3" />
    <path d="M4 16l6-6" stroke="#445" />
  </G>
);
const OutlineColor = () => (
  <G>
    <rect x="0" y="2" width="3.5" height="3.5" fill="#d22" />
    <rect x="0" y="7.5" width="3.5" height="3.5" fill="#2a2" />
    <rect x="0" y="13" width="3.5" height="3.5" fill="#ee0" />
    <path d="M5 16l3-7 7-5 4 4-6 7z" fill="#eee" stroke="#445" strokeWidth="1.3" />
    <path d="M5 16l6-6" stroke="#445" />
  </G>
);
const OutlineStyle = () => (
  <G>
    <path d="M1 2v15" stroke="#8080a4" strokeWidth="1.8" strokeDasharray="1.5 1.5" />
    <path d="M4 16l3-7 7-5 4 4-6 7z" fill="#eee" stroke="#778" strokeWidth="1.2" />
  </G>
);
const MiterIcon = () => (
  <G>
    <path d="M1 1.5h17" stroke="#889" />
    <path d="M7 3h5l6 14h-5l-3-8-3 8H2z" fill="#4a4a6a" />
  </G>
);
const CornerIcon = ({ kind }) => {
  const shape = {
    a: 'M3 3h14v5H8v9H3z',
    b: 'M5 3h12v5H9v9H4V5z',
    c: 'M8 3h9v5H9v9H4V7z',
    d: 'M1 7h18v6H1z',
    e: 'M4 7h14v6H4a3 3 0 0 1 0-6z',
    f: 'M2 7h16v6H2z',
    g: 'M2 4h15v4H7v9H2z',
    h: 'M2 3h16v5H8v9H2z',
    i: 'M4 4h14v5H8v8H4z',
  }[kind];
  const line = kind === 'd' || kind === 'e' || kind === 'f';
  return (
    <G>
      <path d={shape} fill="#8a8aa0" />
      <path d={line ? 'M3 10h14' : 'M6 5.5h11M6 5.5v11'} stroke="#1c1c3c" strokeWidth="1.2" />
      <circle cx={line ? 3 : 6} cy={line ? 10 : 5.5} r="1.3" fill="#fff" stroke="#222" strokeWidth="0.7" />
    </G>
  );
};
const CrossBox = ({ dark }) => (
  <G>
    <rect x="2" y="2" width="16" height="16" fill={dark ? '#c8c8d4' : '#f4f4fa'} stroke={dark ? '#222' : MID} />
    <path d="M2 2l16 16M18 2L2 18" stroke={dark ? '#111' : MID} />
  </G>
);
const FlatFill = () => (
  <G><rect x="1" y="1" width="18" height="18" fill="#6a6f9c" stroke="#565a84" /></G>
);
const GradFill = ({ id }) => (
  <G>
    <defs>
      <linearGradient id={id} x1="0" y1="0" x2="1" y2="1">
        <stop offset="0" stopColor="#e4e4ee" />
        <stop offset="1" stopColor="#777aa4" />
      </linearGradient>
    </defs>
    <rect x="1" y="1" width="18" height="18" fill={`url(#${id})`} stroke="#777" />
  </G>
);
const GridFill = () => (
  <G>
    <rect x="1" y="1" width="18" height="18" fill="#f4f4f4" stroke="#565a84" />
    <path d="M5 1v18M10 1v18M15 1v18" stroke="#444a78" strokeWidth="2.4" strokeDasharray="2 1.4" />
    <path d="M1 6h18M1 13h18" stroke="#fff" />
  </G>
);
const SwirlFill = () => (
  <G>
    <rect x="1" y="1" width="18" height="18" fill="#6a6f9c" />
    <path d="M5 6c3-3 6 0 3 2s-3-3 1-3M9 12c3-3 6 0 4 2s-4-1-1-2M4 15c1-3 4-3 4 0" stroke="#e8e8f4" fill="none" />
  </G>
);
const TwoColor = () => (
  <G>
    <rect x="1" y="1" width="9" height="18" fill="#565a8c" stroke="#565a84" />
    <rect x="10" y="1" width="9" height="18" fill="#eef0f8" stroke="#565a84" />
  </G>
);
const TransIcon = ({ fill, children }) => (
  <G>
    <rect x="1" y="3" width="16" height="16" fill={fill} stroke="#444" strokeWidth="0.6" />
    {children}
    <rect x="11" y="1" width="8" height="8" fill="#c8c8c8" />
    <rect x="11" y="1" width="4" height="4" fill="#eee" />
    <rect x="15" y="5" width="4" height="4" fill="#eee" />
  </G>
);
const PieIcon = ({ color = MID, light }) => (
  <G>
    <path d="M10 10V3a7 7 0 1 1-7 7z" fill={light ? '#e4e4e4' : '#f2f2f2'} stroke={color} />
    <path d="M10 3a7 7 0 0 1 7 7h-7z" fill="#f7f7f7" />
  </G>
);
const ArcIcon = () => (
  <G>
    <path d="M10 3a7 7 0 1 0 7 7" fill="none" stroke={MID} strokeWidth="1.3" />
  </G>
);
const AngleIcon = () => (
  <svg width="14" height="12" viewBox="0 0 14 12">
    <path d="M1 7a6 5.5 0 0 1 12 0" fill="#ddd" stroke="#555" />
    <path d="M2 7l2-2 2 3M8 8l2-3 2 2" fill="none" stroke="#333" />
  </svg>
);
const ListIcon = () => (
  <G>
    <path d="M2 4h5M2 8h5M2 12h5M2 16h5" stroke="#555" />
    <rect x="8" y="3" width="10" height="14" fill="#ddd" stroke="#555" />
  </G>
);
const EyeDropper = ({ color = '#bbb' }) => (
  <G s={18}>
    <path d="M3 18l-1-1L11 8l2 2-9 9z" fill={color} />
    <path d="M11 6l4-4 3 3-4 4z" fill={color} />
  </G>
);
const PageAdd = () => (
  <svg width="12" height="14" viewBox="0 0 12 14">
    <path d="M.5.5h7l4 4v9H.5z" fill="#fff" stroke="#222" />
    <path d="M6 5v6M3 8h6" stroke="#222" />
  </svg>
);
const NavTri = ({ dir, bar }) => (
  <svg width="9" height="12" viewBox="0 0 9 12">
    <path d={dir === 'l' ? 'M8 1v10L2 6z' : 'M1 1v10l6-5z'} fill="#777" />
    {bar && <path d={dir === 'l' ? 'M.5 1v10' : 'M8.5 1v10'} stroke="#777" />}
  </svg>
);
const MonitorQ = () => (
  <G>
    <rect x="1" y="1" width="18" height="14" fill="#c8c8c8" stroke="#888" />
    <rect x="3" y="3" width="5" height="10" fill="#c05050" />
    <rect x="12" y="3" width="5" height="10" fill="#5a9a5a" />
    <circle cx="10" cy="8" r="3.5" fill="#eee" stroke="#222" />
    <path d="M6 18h8" stroke="#999" strokeWidth="2" />
  </G>
);
const ZoomSmall = () => (
  <G s={15}>
    <circle cx="8" cy="8" r="6" fill="#eee" stroke="#555" strokeWidth="1.6" />
    <circle cx="8" cy="8" r="2" fill="#888" />
    <path d="M12.5 12.5l6 6" stroke="#555" strokeWidth="2.4" />
  </G>
);

const CorelLogo = ({ s = 21 }) => (
  <svg width={s} height={s} viewBox="0 0 30 30" style={{ display: 'block' }}>
    <rect width="30" height="30" fill="#62a845" />
    <path d="M14 3c4 0 9 0 14 0-2 6-4 10-7 13-3-4-5-8-7-13z" fill="#8ec46f" />
    <path d="M0 6c7 3 14 10 19 19l-3 3C12 22 6 14 0 10z" fill="#fff" />
    <path d="M1 14l14 14H6L1 23z" fill="#c8e4b4" />
  </svg>
);
const WinLogo = () => (
  <svg width="20" height="20" viewBox="0 0 20 20">
    <path d="M0 3l8.5-1.2v7.7H0zM9.5 1.7L20 0v9.5H9.5zM0 10.5h8.5v7.7L0 17zM9.5 10.5H20V20L9.5 18.3z" fill="#fff" />
  </svg>
);
const TaskView = () => (
  <svg width="22" height="20" viewBox="0 0 22 20">
    <path d="M1 0v3h14V0M1 20v-3h14v3M1.5 6h13v8h-13z" fill="none" stroke="#fff" strokeWidth="1.2" />
    <path d="M19.5 0v7M19.5 12v8" stroke="#fff" />
    <rect x="18" y="8" width="3" height="3" fill="#fff" />
  </svg>
);
const PhotoApp = () => (
  <svg width="28" height="30" viewBox="0 0 28 30">
    <rect width="28" height="30" fill="#c9b893" />
    <rect x="3" y="3" width="22" height="24" fill="#f3ecd6" />
    <rect x="4" y="4" width="20" height="18" fill="#2a90d8" />
    <path d="M4 22v-5c6-4 14-4 20 0v5z" fill="#e8b848" />
    <path d="M9 16l3-6 3 7zM15 17l3-4 3 5z" fill="#3a9a5a" />
  </svg>
);
const EdgeApp = () => (
  <svg width="30" height="30" viewBox="0 0 30 30">
    <defs>
      <linearGradient id="edgeA" x1="0" y1="0" x2="1" y2="1">
        <stop offset="0" stopColor="#36c5a0" />
        <stop offset="1" stopColor="#55d960" />
      </linearGradient>
    </defs>
    <circle cx="15" cy="15" r="15" fill="#1478c8" />
    <path d="M2 12C4 4 10 0 15 0c9 0 15 6 15 15 0 5-5 7-9 7s-4-1-4-2c4-1 4-9-3-9-6 0-11 2-12 1z" fill="url(#edgeA)" />
    <path d="M10 20c0-6 4-8 8-7 2 3 0 6-2 7 4 3 9 2 12 0-3 7-9 10-14 9-3-1-4-6-4-9z" fill="#0c3a8a" />
  </svg>
);
const CalcApp = () => (
  <svg width="23" height="30" viewBox="0 0 23 30">
    <rect width="23" height="30" rx="2" fill="#5a6a7a" />
    <rect x="3" y="3" width="17" height="5" fill="#40c8f0" />
    <g fill="#c8d2da">
      <rect x="3" y="10" width="5" height="5" /><rect x="9" y="10" width="5" height="5" /><rect x="15" y="10" width="5" height="5" />
      <rect x="3" y="16" width="5" height="5" /><rect x="9" y="16" width="5" height="5" />
      <rect x="3" y="22" width="5" height="5" /><rect x="9" y="22" width="5" height="5" />
    </g>
    <rect x="15" y="16" width="5" height="11" fill="#0c4a8a" />
  </svg>
);
const FolderApp = () => (
  <svg width="28" height="24" viewBox="0 0 28 24">
    <path d="M0 2h10l2 3h-12z" fill="#e0a000" />
    <rect y="5" width="28" height="19" fill="#f8d458" />
    <path d="M5 24v-7c0-2 1-3 3-3h12c2 0 3 1 3 3v7h-5v-5h-8v5z" fill="#3a90d8" />
  </svg>
);
const KeyboardApp = () => (
  <svg width="30" height="30" viewBox="0 0 30 30">
    <path d="M4 2l22 2v16L4 18z" fill="#778" />
    <rect x="8" y="4" width="12" height="4" fill="#1a3ab8" />
    <path d="M1 9l24-1 2 7L3 18z" fill="#cfd8e8" stroke="#4a6ab8" />
    <path d="M4 11l20-1M5 13l20-1M5 15l20-1" stroke="#4a7ad0" strokeDasharray="1.5 1" />
    <ellipse cx="16" cy="26" rx="9" ry="3" fill="#bbb" />
    <rect x="13" y="19" width="6" height="6" fill="#999" />
  </svg>
);
const WordApp = () => (
  <svg width="28" height="28" viewBox="0 0 28 28">
    <rect width="28" height="28" fill="#eef2fa" stroke="#1a4a9a" />
    <path d="M16 28l12-8v8z" fill="#1a4a9a" />
    <path d="M17 20l9-3 1 6-8 3z" fill="#fff" stroke="#7a9ad0" strokeWidth="0.6" />
    <text x="1.5" y="21" fontSize="21" fontWeight="700" fill="#1a4aa8" fontFamily="Liberation Sans">W</text>
  </svg>
);
const UserIcon = () => (
  <svg width="18" height="18" viewBox="0 0 18 18">
    <rect width="18" height="18" fill="#c4c4c4" />
    <circle cx="9" cy="6" r="3.5" fill="#d04a1c" />
    <path d="M3 16c0-4 3-5 6-5s6 1 6 5z" fill="#d04a1c" />
  </svg>
);
const Globe = () => (
  <svg width="22" height="22" viewBox="0 0 22 22">
    <g fill="none" stroke="#fff" strokeWidth="1.1">
      <circle cx="10" cy="10" r="9" />
      <ellipse cx="10" cy="10" rx="4" ry="9" />
      <path d="M1.5 7h17M1.5 13h17" />
      <circle cx="16" cy="16" r="4" fill="#1a1a1a" />
      <path d="M13.5 18.5l5-5" />
    </g>
  </svg>
);
const Battery = () => (
  <svg width="20" height="12" viewBox="0 0 20 12">
    <rect x=".5" y=".5" width="16" height="11" fill="none" stroke="#fff" />
    <rect x="2" y="2" width="7" height="8" fill="#fff" />
    <rect x="17" y="4" width="2" height="4" fill="#fff" />
  </svg>
);
const Speaker = () => (
  <svg width="22" height="20" viewBox="0 0 22 20">
    <path d="M1 7v6h3l4 4V3L4 7z" fill="none" stroke="#fff" />
    <path d="M11 7c1 2 1 4 0 6M14 5c2 3 2 7 0 10M17 3c3 4 3 10 0 14" fill="none" stroke="#fff" />
  </svg>
);
const Notify = () => (
  <svg width="20" height="22" viewBox="0 0 20 22">
    <path d="M0 0h20v16h-6l-2 4-2-4H0z" fill="#fff" />
    <path d="M3 5h14M3 8h14M3 11h9" stroke="#1a1a1a" />
    <circle cx="15" cy="17" r="4" fill="#1a1a1a" stroke="#fff" />
  </svg>
);

const PAL = [
  '#231815', '#3e3a39', '#595757', '#727171', '#898989', '#9fa0a0', '#b5b5b6', '#c9caca', '#dcdddd', '#efefef', '#ffffff',
  '#1d2088', '#00a0e9', '#009944', '#fff100', '#e60012', '#e4007f', '#a73582', '#ee7f00', '#f3b0b3', '#85766a',
  '#cfcde3', '#a89bc9', '#6e8ac3', '#7968ac', '#8b81ab', '#4b5f8b', '#534f6e', '#6f8299', '#0088d2', '#9cd6f5', '#b3c9d7', '#93a6b1', '#6b7b87',
];
const MENU = [
  [<><u>F</u>ile</>, 'File', 45], [<><u>E</u>dit</>, 'Edit', 48], [<><u>V</u>iew</>, 'View', 54], [<><u>L</u>ayout</>, 'Layout', 66.5],
  [<>Ob<u>j</u>ect</>, 'Object', 66], [<>Effe<u>c</u>ts</>, 'Effects', 65.5], [<><u>B</u>itmaps</>, 'Bitmaps', 76.6], [<>Te<u>x</u>t</>, 'Text', 51],
  [<><u>T</u>able</>, 'Table', 58], [<>T<u>o</u>ols</>, 'Tools', 57.4], [<><u>W</u>indow</>, 'Window', 76], [<><u>H</u>elp</>, 'Help', 40],
];
const Down = ({ size = 15 }) => <ChevronDown size={size} strokeWidth={1} color="#333" />;
const Handle = ({ x, y }) => <rect x={x - 3.5} y={y - 3.5} width="7" height="7" fill="#000" />;

export default function App() {
  return (
    <Shell>
      <GlobalStyle />
      <TitleBar>
        <CorelLogo />
        <TitleText>CorelDRAW X7 (64-Bit) - Stempel</TitleText>
        <TitleButton><UserIcon /></TitleButton>
        <TitleButton $ml={12}>
          <svg width="13" height="14" viewBox="0 0 13 14"><rect y="11" width="12" height="3" fill="#000" /></svg>
        </TitleButton>
        <TitleButton>
          <svg width="15" height="15" viewBox="0 0 15 15"><path d="M3.5 3V.7h10.8v9H12M.7 3.5h11v10.8H.7z" fill="none" stroke="#000" strokeWidth="1.3" /></svg>
        </TitleButton>
        <TitleButton>
          <svg width="15" height="14" viewBox="0 0 15 14"><path d="M1 .5l13 13M14 .5l-13 13" stroke="#000" strokeWidth="2" /></svg>
        </TitleButton>
        <StatusGap $w={3} />
      </TitleBar>

      <MenuBar>
        {MENU.map(([node, key, w]) => <MenuItem key={key} $w={w}>{node}</MenuItem>)}
      </MenuBar>

      <ToolRow $h={36}>
        <Tool><NewDoc /></Tool>
        <Tool><OpenIcon /></Tool>
        <Drop />
        <Tool $ml={0.5}><SaveIcon /></Tool>
        <Tool><PrintIcon /></Tool>
        <Sep />
        <Tool><CutIcon /></Tool>
        <Tool><CopyIcon /></Tool>
        <Tool><PasteIcon /></Tool>
        <Sep $m={4} />
        <Tool><UndoIcon /></Tool>
        <Drop />
        <Tool><RedoIcon /></Tool>
        <Drop />
        <Sep />
        <Tool><ConnectIcon /></Tool>
        <Sep $m={3} $r={5} />
        <Tool><ImportIcon /></Tool>
        <Tool><ExportIcon /></Tool>
        <Tool><PdfIcon /></Tool>
        <Sep $m={4} $r={2} />
        <Combo $w={105} $ml={2}>62%<Down /></Combo>
        <Tool $ml={1.5}><FullIcon /></Tool>
        <Sep $m={4} />
        <Tool><RulerIcon /></Tool>
        <Tool><GridEye /></Tool>
        <Tool $w={30} $ml={2} $on><GuideEye /></Tool>
        <Sep $m={5} $r={8} />
        <SnapLabel>Snap To</SnapLabel>
        <Drop $ml={10} $w={16} />
        <Sep $m={3} $r={5} />
        <Tool><OptionsIcon /></Tool>
        <Tool><CheckIcon /></Tool>
        <Sep $m={3} />
        <Tool><LaunchIcon /></Tool>
        <Drop $ml={2} />
      </ToolRow>

      <ToolRow $h={50}>
        <SizeStack>
          <WidthIcon /><SizeField>174,837 mm</SizeField>
          <HeightIcon /><SizeField>174,837 mm</SizeField>
        </SizeStack>
        <Tool $w={25}><LockOpen /></Tool>
        <Sep $h={42} />
        <Tool $w={22}><RotateIcon /></Tool>
        <Combo $w={60} $h={30} $pad={3}>0,0</Combo>
        <Degree>°</Degree>
        <Sep $h={42} $m={8} $r={3} />
        <Tool><CombineIcon /></Tool>
        <Sep $h={42} $m={3} $r={5.5} />
        <Tool><Bool back="#fff" front="#dcdce6" /></Tool>
        <Tool><Bool back="#fff" front="#dcdce6" /></Tool>
        <Tool><Bool back="#8a8a9c" front="none" frontDash /></Tool>
        <Tool><Bool back="#fff" front="#d6d6e2" /></Tool>
        <Tool><Bool back="none" front="#cfcfd8" backDash /></Tool>
        <Tool $blue $w={30} $ml={2}><Bool back="#b0b0bc" front="none" frontDash /></Tool>
        <Tool $ml={2}><Bool back="#fff" front="#5a5a72" /></Tool>
        <Sep $h={42} $m={3} $r={5} />
        <Tool $w={22}><PenIcon /></Tool>
        <Combo $w={98} $h={30}>0,5 pt<Down /></Combo>
        <Sep $h={42} $m={5} />
        <Tool><FadedBox /></Tool>
        <Tool><FadedBox x /></Tool>
        <Tool><FadedBox x /></Tool>
        <Sep $h={42} $m={3} />
        <Tool><AlignIcon /></Tool>
        <Sep $h={42} $m={3} />
        <Tool $w={52}><PlusRound /></Tool>
      </ToolRow>

      <Workspace>
        <Toolbox>
          <BoxTool $on $more>
            <G><path d="M5 1l10 9-4 1 3 6-3 1-2-6-4 3z" fill="#eef" stroke={MID} /></G>
          </BoxTool>
          <BoxTool $more>
            <G><path d="M6 1c-4 5-4 11 3 17" stroke={MID} fill="none" /><circle cx="5" cy="7" r="2" fill="#fff" stroke="#333" /><path d="M8 8l8 3-6 5z" fill="#222" /></G>
          </BoxTool>
          <BoxSep />
          <BoxTool $more>
            <G><path d="M6 1v14h13M1 5h13v14" stroke="#333" strokeWidth="2.4" fill="none" /><path d="M3 17L17 3" stroke="#333" /></G>
          </BoxTool>
          <BoxSep />
          <BoxTool $more>
            <G><path d="M5 1v8M1 5h8" stroke={MID} /><path d="M4 12c2-3 3 3 5 0s3 3 5 0 2 2 4 1" stroke="#444" fill="none" strokeWidth="1.3" /></G>
          </BoxTool>
          <BoxTool>
            <G><rect x="3" y="3" width="14" height="14" fill="#f4f4f4" /><rect x="3" y="10" width="14" height="7" fill="#d6d6e2" /><rect x="3" y="3" width="14" height="14" fill="none" stroke={INK} /></G>
          </BoxTool>
          <BoxTool><CircleIcon /></BoxTool>
          <BoxSep />
          <BoxTool $more>
            <G s={18}><path d="M2 18L9 2h2l7 16h-5l-1-4H8l-1 4z" fill="#d9d9e2" stroke="#555" /></G>
          </BoxTool>
          <BoxSep $h={5} />
          <BoxTool $more>
            <G><rect x="5" y="5" width="14" height="13" fill="#a8a8c0" /><rect x="2" y="2" width="13" height="12" fill="#f2f2f2" stroke={INK} /></G>
          </BoxTool>
          <BoxTool>
            <G><path d="M7 1l8 3-3 5-7-2z" fill="#eee" stroke="#555" /><path d="M2 12l6-2M2 11l2 4" stroke="#777" /><path d="M14 10l5 9h-10z" fill="#4a4a78" /></G>
          </BoxTool>
          <BoxSep $h={10} />
          <BoxTool>
            <G><rect x="1" y="10" width="9" height="9" fill="#e8761c" /><path d="M8 11l8-8 2 2-8 8z" fill="#333" /><path d="M14 3l2-2 3 3-2 2z" fill="#222" /></G>
          </BoxTool>
          <BoxTool $more>
            <G><path d="M6 1l6 5-4 4-5-4z" fill="#eee" stroke="#555" /><path d="M13 9l5 9H8z" fill="#e8b84a" /></G>
          </BoxTool>
          <BoxTool>
            <G><path d="M6 1l6 5-4 4-5-4z" fill="#e8a848" stroke="#555" /><rect x="9" y="12" width="8" height="6" fill="none" stroke="#333" /><path d="M11 6v8h6" stroke="#e07a10" fill="none" strokeWidth="1.5" /></G>
          </BoxTool>
          <BoxSep $h={14} />
          <BoxTool><PlusRound s={22} /></BoxTool>
        </Toolbox>

        <DocArea>
          <DocTabs>
            <DocTab $w={138} $bg="#dcdcdc" $pad={3}>Welcome Screen</DocTab>
            <DocTab $w={84} $bg="#c9e0fa" $pad={4}>Stempel</DocTab>
            <AddTab>+</AddTab>
          </DocTabs>
          <CanvasRow>
            <Canvas>
              <Drawing width="1479" height="804" viewBox="36 164 1479 804">
                <rect x="1024" y="220" width="6" height="703" fill="#c4c4c4" />
                <rect x="532" y="917" width="498" height="6" fill="#c4c4c4" />
                <rect x="527.5" y="215.5" width="496" height="702" fill="#fff" stroke="#a8a8a8" />
                <circle cx="771.5" cy="564.5" r="206.5" fill="none" stroke="#444" strokeWidth="0.9" />
                <circle cx="771.5" cy="564.5" r="146.5" fill="none" stroke="#444" strokeWidth="0.9" />
                {[556.5, 771, 984.5].map((x) =>
                  [349.5, 777.5].map((y) => <Handle key={`${x}-${y}`} x={x} y={y} />)
                )}
                <Handle x={556.5} y={563.5} />
                <Handle x={984.5} y={563.5} />
                <rect x="770" y="356.5" width="3" height="3" fill="#fff" stroke="#000" strokeWidth="0.8" />
                <rect x="770" y="416.5" width="3" height="3" fill="#fff" stroke="#000" strokeWidth="0.8" />
                <path d="M769 561.5l6 6M775 561.5l-6 6" stroke="#000" strokeWidth="1.4" />
              </Drawing>
            </Canvas>
            <VTrack>
              <Arrow><ChevronUp size={17} strokeWidth={2} /></Arrow>
              <VThumb $h={391} $mt={185} />
              <Arrow><ChevronDown size={17} strokeWidth={2} /></Arrow>
            </VTrack>
          </CanvasRow>
          <PageBar>
            <PageNav>
              <PageIcon $w={14}><PageAdd /></PageIcon>
              <PageIcon $w={20} $ml={4}><NavTri dir="l" bar /></PageIcon>
              <PageIcon><NavTri dir="l" /></PageIcon>
              <PageCount>1 of 1</PageCount>
              <PageIcon $w={20}><NavTri dir="r" /></PageIcon>
              <PageIcon><NavTri dir="r" bar /></PageIcon>
              <PageIcon><PageAdd /></PageIcon>
              <PageTab>Page 1</PageTab>
              <Grip />
            </PageNav>
            <HTrack>
              <HButton $w={23} $bg="#f4f4f4"><ChevronLeft size={16} strokeWidth={2.4} /></HButton>
              <HThumb />
              <HButton $w={15}><ChevronRight size={16} strokeWidth={2.4} /></HButton>
              <HButton $w={24}><ZoomSmall /></HButton>
            </HTrack>
          </PageBar>
        </DocArea>

        <Gap />

        <Docker>
          <DockHead>
            <DockTitle>Object Properties</DockTitle>
            <FastIcon />
            <CloseSmall />
          </DockHead>
          <DockBody>
            <DockMain>
              <TabIcons>
                <TabIcon $ml={-1}><PenIcon s={17} /></TabIcon>
                <TabIcon><BucketIcon /></TabIcon>
                <TabIcon><GlassIcon /></TabIcon>
                <TabIcon><CircleIcon s={14} /></TabIcon>
                <TabIcon><SummaryIcon /></TabIcon>
                <TabIcon $ml={90} $w={30} $on><TabBox /></TabIcon>
                <TabIcon $ml={4} $w={30}><ObjectsIcon /></TabIcon>
              </TabIcons>
              <ScrollWrap>
                <Panel>
                  <Section>
                    <SectionHead><Collapse />Outline</SectionHead>
                    <Row $mt={3}>
                      <FieldIcon><OutlineWidth /></FieldIcon>
                      <Combo $w={174} $line="#888">0,5 pt<Down /></Combo>
                      <Combo $w={105} $ml={5} $bg="#e2e2e2" $line="#bbb">points<Down /></Combo>
                    </Row>
                    <Row $mt={7}>
                      <FieldIcon><OutlineColor /></FieldIcon>
                      <SwatchField><SwatchFill $color="#231815" /><DropPart><Down /></DropPart></SwatchField>
                    </Row>
                    <Row $mt={5}>
                      <FieldIcon><OutlineStyle /></FieldIcon>
                      <SwatchField><LineFill /><DropPart><Down /></DropPart></SwatchField>
                      <Ellipsis>...</Ellipsis>
                    </Row>
                    <Divider />
                    <MiterWrap>
                      <FieldIcon><MiterIcon /></FieldIcon>
                      <MiterField>
                        5,0
                        <Spin><SpinPart $up /><SpinPart /></Spin>
                      </MiterField>
                      <CornerGrid>
                        {['a', 'b', 'c', 'd', 'e', 'f', 'g', 'h', 'i'].map((k) => (
                          <OptionButton key={k} $on={k === 'a' || k === 'd' || k === 'h'}><CornerIcon kind={k} /></OptionButton>
                        ))}
                      </CornerGrid>
                    </MiterWrap>
                    <CollapseBar />
                  </Section>

                  <Section>
                    <SectionHead><Collapse />Fill</SectionHead>
                    <OptionRow $mt={4}>
                      <OptionButton $on><CrossBox /></OptionButton>
                      <OptionButton><FlatFill /></OptionButton>
                      <OptionButton><GradFill id="gradA" /></OptionButton>
                      <OptionButton><GridFill /></OptionButton>
                      <OptionButton><SwirlFill /></OptionButton>
                      <OptionButton $more><TwoColor /></OptionButton>
                    </OptionRow>
                    <Divider />
                    <NoFill>The object has no fill.</NoFill>
                  </Section>

                  <Section $pb={12}>
                    <SectionHead><Collapse />Transparency</SectionHead>
                    <Row $mt={4}>
                      <Combo $w={303} $bg="#e2e2e2" $line="#bbb">Normal<Down /></Combo>
                    </Row>
                    <Divider $mt={8} />
                    <OptionRow $mt={6}>
                      <OptionButton $on><CrossBox dark /></OptionButton>
                      <OptionButton><TransIcon fill="#222" /></OptionButton>
                      <OptionButton><TransIcon fill="#999" /></OptionButton>
                      <OptionButton>
                        <TransIcon fill="#2c2c3c"><path d="M4 3v16M9 3v16" stroke="#ddd" strokeDasharray="2 1.4" /></TransIcon>
                      </OptionButton>
                      <OptionButton>
                        <TransIcon fill="#2c2c3c"><path d="M3 8c3-3 5 0 3 2M5 16c3-3 6-2 8 0" stroke="#ddd" fill="none" /></TransIcon>
                      </OptionButton>
                      <OptionButton $more>
                        <TransIcon fill="#20204c"><rect x="9" y="10" width="8" height="9" fill="#e4e4f0" /></TransIcon>
                      </OptionButton>
                    </OptionRow>
                    <Divider />
                  </Section>

                  <Section $pb={12}>
                    <SectionHead><Collapse />Ellipse</SectionHead>
                    <OptionRow $mt={3}>
                      <OptionButton $on><CircleIcon /></OptionButton>
                      <OptionButton><PieIcon /></OptionButton>
                      <OptionButton><ArcIcon /></OptionButton>
                      <PushRight><PieIcon color="#ccc" light /></PushRight>
                    </OptionRow>
                    <AngleRow $mt={5}>
                      <AngleLabel>Starting angle:</AngleLabel>
                      <AngleIconCell><AngleIcon /></AngleIconCell>
                      <AngleField>90,0 °<AngleSpins><AngleSpin /><AngleSpin $up /></AngleSpins></AngleField>
                    </AngleRow>
                    <AngleRow>
                      <AngleLabel>Ending angle:</AngleLabel>
                      <AngleIconCell><AngleIcon /></AngleIconCell>
                      <AngleField>90,0 °<AngleSpins><AngleSpin /><AngleSpin $up /></AngleSpins></AngleField>
                    </AngleRow>
                  </Section>

                  <Section>
                    <SectionHead><Collapse />Summary</SectionHead>
                    <SummaryRow $h={26}><SummaryLabel>Selection:</SummaryLabel><span>2 Objects Selected</span></SummaryRow>
                    <SummaryRow $h={26}><SummaryLabel>Layer:</SummaryLabel><span>Layer 1</span></SummaryRow>
                    <SummaryRow $h={31}><SummaryLabel>Type:</SummaryLabel><span>All of Type Ellipse</span><LockButton><LockClosed /></LockButton></SummaryRow>
                    <Divider $mt={5} />
                    <Row $mt={6}>
                      <ListSpacer />
                      <ListIcon />
                      <Combo $w={234} $ml={4} $bg="#e2e2e2" $line="#bbb">None<Down /></Combo>
                    </Row>
                  </Section>
                </Panel>
                <PanelScroll>
                  <Arrow $h={19}><ChevronUp size={17} strokeWidth={2.2} color="#333" /></Arrow>
                  <PanelThumb />
                  <Arrow $h={28}><ChevronDown size={17} strokeWidth={2.2} color="#333" /></Arrow>
                </PanelScroll>
              </ScrollWrap>
            </DockMain>
            <VerticalTabs>
              <VerticalTab>
                <svg width="20" height="20" viewBox="0 0 20 20">
                  <path d="M7 1l6 6-6 6-6-6z" fill="#f2f2f2" stroke="#666" />
                  <path d="M1 7h12l-6 6z" fill="#e8a030" />
                  <circle cx="13" cy="12" r="6" fill="#c8c8e0" stroke="#667" />
                  <path d="M8 12h10M13 7v10M10 8v8M16 8v8" stroke="#667" strokeWidth="0.7" />
                </svg>
                <VerticalText>Object Properties</VerticalText>
              </VerticalTab>
              <PanelPlus><PlusRound s={21} /></PanelPlus>
            </VerticalTabs>
          </DockBody>
        </Docker>

        <Palette>
          <PaletteTop>
            <Dots />
            <PlayMark />
            <EyeDropper />
            <ChevronUp size={17} strokeWidth={2.4} />
          </PaletteTop>
          <Swatches>
            <NoColor>
              <svg width="19" height="19" viewBox="0 0 19 19"><path d="M0 0l19 19M19 0L0 19" stroke="#333" /></svg>
            </NoColor>
            {PAL.map((c, i) => <Swatch key={i} $c={c} />)}
          </Swatches>
          <PaletteEnd>
            <ChevronDown size={18} strokeWidth={2.4} />
            <svg width="14" height="14" viewBox="0 0 14 14">
              <path d="M1 1l5 6-5 6M7 1l5 6-5 6" fill="none" stroke="#ccc" strokeWidth="1.6" />
            </svg>
          </PaletteEnd>
        </Palette>
      </Workspace>

      <StatusBar>
        <Coordinates>( -7,442; 318,287 )</Coordinates>
        <PlayBox />
        <StatusText>2 Objects Selected on Layer 1</StatusText>
        <StatusRight>
          <MonitorQ />
          <StatusGap $w={16} />
          <BucketIcon s={17} />
          <NoneBox>
            <svg width="20" height="20" viewBox="0 0 20 20"><path d="M0 0l20 20M20 0L0 20" stroke="#333" /></svg>
          </NoneBox>
          <NoneLabel>None</NoneLabel>
          <Sep $h={14} $m={2} $r={6} />
          <PenIcon />
          <StatusSwatch />
          <ColorInfo>C:0 M:0 Y:0 K:100  0,500 pt</ColorInfo>
        </StatusRight>
        <GhostClip><GhostText>Selection: 2 Objects Selected</GhostText></GhostClip>
      </StatusBar>

      <Taskbar>
        <StartButton><WinLogo /></StartButton>
        <SearchBox>
          <Search size={21} strokeWidth={1.3} color="#eee" style={{ transform: 'scaleX(-1)' }} />
          Type here to search
        </SearchBox>
        <TaskCell $w={64}><TaskView /></TaskCell>
        <TaskCell><PhotoApp /></TaskCell>
        <TaskCell><EdgeApp /></TaskCell>
        <TaskCell><CalcApp /></TaskCell>
        <TaskCell $open><FolderApp /></TaskCell>
        <TaskCell><KeyboardApp /></TaskCell>
        <TaskCell $open><WordApp /></TaskCell>
        <TaskCell $open $on><CorelLogo s={30} /></TaskCell>
        <Tray>
          <TrayCell>
            <svg width="16" height="10" viewBox="0 0 16 10"><path d="M1 9l7-8 7 8" fill="none" stroke="#fff" /></svg>
          </TrayCell>
          <TrayCell><Globe /></TrayCell>
          <TrayCell $w={30}><Battery /></TrayCell>
          <TrayCell $w={29}><Speaker /></TrayCell>
          <TrayCell $w={42}>ENG</TrayCell>
          <Clock>22:02<br />29/09/2020</Clock>
          <TrayCell $w={52}><Notify /></TrayCell>
          <ShowDesktop />
        </Tray>
      </Taskbar>

      <Tooltip>
        <b>Back minus front</b>
        <br />
        Remove the front object from the back object.
      </Tooltip>
    </Shell>
  );
}
